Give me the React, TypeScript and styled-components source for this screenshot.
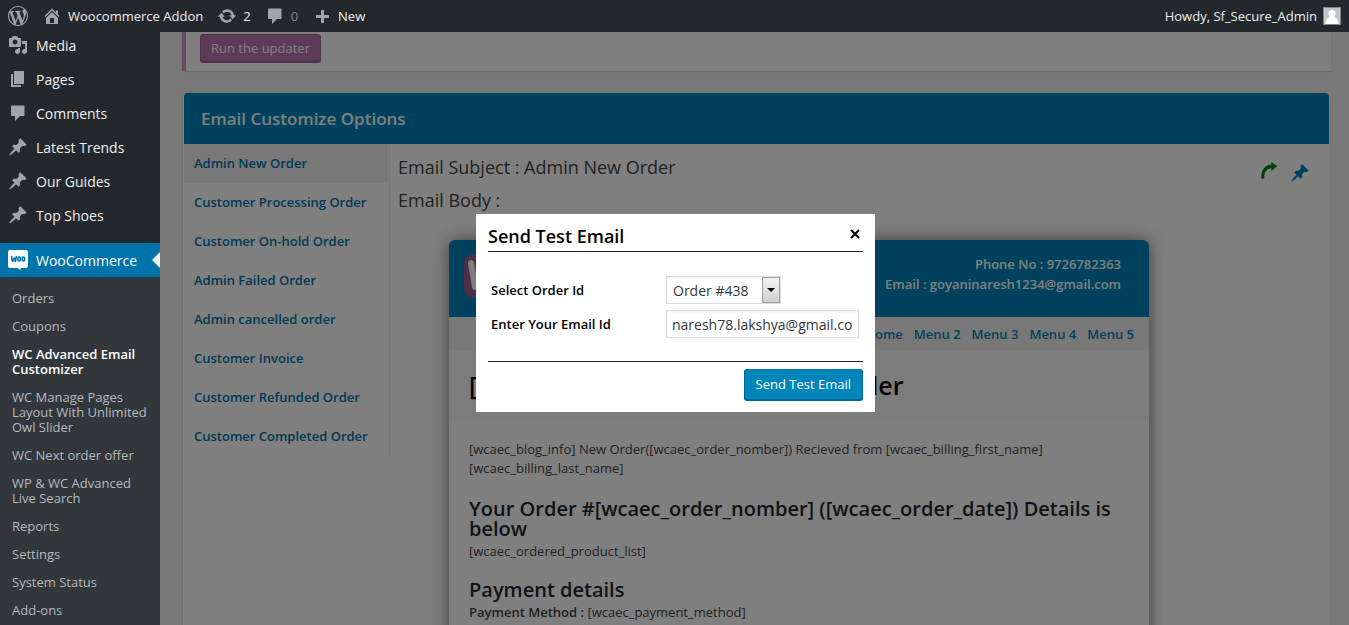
import React from "react";
import styled, { createGlobalStyle, css } from "styled-components";

const GlobalStyle = createGlobalStyle`
  *, *::before, *::after { box-sizing: border-box; }
  html, body { margin: 0; padding: 0; background: #f1f1f1; }
  body {
    font-family: "Open Sans", "Liberation Sans", sans-serif;
    font-size: 13px;
    line-height: 19px;
    color: #444;
  }
  a { text-decoration: none; color: #0073aa; }
  h1, h2, h3, h4, p, ul { margin: 0; padding: 0; }
  ul { list-style: none; }
`;

const icons = {
  wordpress:
    "M20 10c0-5.51-4.49-10-10-10C4.48 0 0 4.49 0 10c0 5.52 4.48 10 10 10 5.51 0 10-4.48 10-10zM7.78 15.37L4.37 6.22c.55-.02 1.17-.08 1.17-.08.5-.06.44-1.13-.06-1.11 0 0-1.45.11-2.37.11-.18 0-.37 0-.58-.01C4.12 2.69 6.87 1.11 10 1.11c2.33 0 4.45.87 6.05 2.34-.68-.11-1.65.39-1.65 1.58 0 .74.45 1.36.9 2.1.35.61.55 1.36.55 2.46 0 1.49-1.4 5-1.4 5l-3.03-8.37c.54-.02.82-.17.82-.17.5-.05.44-1.25-.06-1.22 0 0-1.44.12-2.38.12-.87 0-2.33-.12-2.33-.12-.5-.03-.56 1.2-.06 1.22l.92.08 1.26 3.41zM17.41 10c.24-.64.74-1.87.43-4.25.7 1.29 1.05 2.71 1.05 4.25 0 3.29-1.73 6.24-4.4 7.78.97-2.59 1.94-5.2 2.92-7.78zM6.1 18.09C3.12 16.65 1.11 13.53 1.11 10c0-1.3.23-2.48.72-3.59C3.25 10.3 4.67 14.2 6.1 18.09zm4.03-6.63l2.58 6.98c-.86.29-1.76.45-2.71.45-.79 0-1.57-.11-2.29-.33.81-2.38 1.62-4.74 2.42-7.1z",
  home: "M16 8.5l1.53 1.53-1.06 1.06L10 4.6l-6.47 6.49-1.06-1.06L10 2.5l4 4v-2h2v4zm-6-2.46l6 5.99V18H4v-5.97zM12 17v-5H8v5h4z",
  update:
    "M10.2 3.28c3.53 0 6.43 2.61 6.92 6h2.08l-3.5 4-3.5-4h2.32c-.45-1.97-2.21-3.45-4.32-3.45-1.45 0-2.73.71-3.54 1.78L4.95 5.66C6.23 4.2 8.11 3.28 10.2 3.28zm-.4 13.44c-3.52 0-6.43-2.61-6.92-6H.8l3.5-4c1.17 1.33 2.33 2.67 3.5 4H5.48c.45 1.97 2.21 3.45 4.32 3.45 1.45 0 2.73-.71 3.54-1.78l1.71 1.95c-1.28 1.46-3.15 2.38-5.25 2.38z",
  comments:
    "M4 2.500h11.500c.6 0 1 .4 1 1v8.500c0 .6-.4 1-1 1H12l-5 5v-5H4c-.6 0-1-.4-1-1V3.500c0-.6.4-1 1-1z",
  plus: "M17 9v3h-5v5H9v-5H4V9h5V4h3v5h5z",
  media:
    "M13 11V4c0-.55-.45-1-1-1h-1.67L9 1H5L3.67 3H2c-.55 0-1 .45-1 1v7c0 .55.45 1 1 1h10c.55 0 1-.45 1-1zM7 4.5c1.38 0 2.5 1.12 2.5 2.5S8.38 9.5 7 9.5 4.5 8.38 4.5 7 5.62 4.5 7 4.5zM14 6h5v10.5c0 1.38-1.12 2.5-2.5 2.5S14 17.88 14 16.5s1.12-2.5 2.5-2.5c.17 0 .34.02.5.05V9h-3V6zm-4 8.05V13h2v3.5c0 1.38-1.12 2.5-2.5 2.5S7 17.88 7 16.5 8.12 14 9.5 14c.17 0 .34.02.5.05z",
  pages: "M6 15V2h10v13H6zm-1 1h8v2H3V5h2v11z",
  pin: "M10.44 3.02l1.82-1.82 6.36 6.35-1.83 1.82c-1.05-.68-2.48-.57-3.41.36l-.75.75c-.92.93-1.04 2.35-.35 3.41l-1.83 1.82-2.41-2.41-2.8 2.79c-.42.42-3.38 2.71-3.8 2.29s1.86-3.39 2.28-3.81l2.79-2.79L4.1 9.36l1.83-1.82c1.05.69 2.48.57 3.4-.36l.75-.75c.93-.92 1.05-2.35.36-3.41z",
  forward:
    "M19.300 3.200L13.300 8V5.200C8.500 5.500 5.800 9.200 6.300 15.500l-2.800.5C2.500 7.200 7 2 13.300 1.500V-1z",
};

type IconName = keyof typeof icons;

const IconSvg = styled.svg`
  display: block;
  flex: none;
  width: 20px;
  height: 20px;
  overflow: visible;
  fill: currentColor;
`;

const Icon = ({ name }: { name: IconName }) => (
  <IconSvg viewBox="0 0 20 20" aria-hidden="true">
    <path d={icons[name]} />
  </IconSvg>
);

const Page = styled.div`
  height: 100vh;
  overflow: hidden;
  display: flex;
  flex-direction: column;
`;

/* Admin bar */

const AdminBar = styled.header`
  position: relative;
  z-index: 3;
  flex: none;
  height: 32px;
  padding: 0 8px;
  display: flex;
  justify-content: space-between;
  background: #23282d;
`;

const BarGroup = styled.nav`
  display: flex;
  align-items: center;
  gap: 14px;
`;

const BarLink = styled.a<{ $faded?: boolean }>`
  display: flex;
  align-items: center;
  gap: 6px;
  height: 32px;
  color: ${(p) => (p.$faded ? "#82878c" : "#eee")};
  svg { color: #a0a5aa; }
`;

const Avatar = styled.svg`
  display: block;
  width: 18px;
  height: 18px;
  border: 1px solid #82878c;
  background: #c5c5c5;
  fill: #fff;
`;

/* Side menu */

const Body = styled.div`
  flex: 1;
  min-height: 0;
  display: flex;
`;

const SideMenu = styled.nav`
  position: relative;
  z-index: 2;
  flex: none;
  width: 160px;
  overflow: hidden;
  background: #23282d;
`;

const MenuList = styled.ul`
  margin-top: -4px;
`;

const MenuLink = styled.a<{ $current?: boolean }>`
  display: flex;
  align-items: center;
  gap: 8px;
  height: 34px;
  padding: 0 0 0 8px;
  font-size: 14px;
  color: #eee;
  svg { color: #a0a5aa; }
  ${(p) =>
    p.$current &&
    css`
      position: relative;
      margin-top: 11px;
      background: #0073aa;
      color: #fff;
      svg { color: #fff; }
      &::after {
        content: "";
        position: absolute;
        right: 0;
        top: 9px;
        border: 8px solid transparent;
        border-right-color: #f1f1f1;
        border-left-width: 0;
      }
    `}
`;

const SubMenu = styled.ul`
  padding: 7px 0;
  background: #32373c;
`;

const SubLink = styled.a<{ $current?: boolean }>`
  display: block;
  padding: 7px 12px 6px;
  line-height: 15px;
  color: ${(p) => (p.$current ? "#fff" : "#b4b9be")};
  font-weight: ${(p) => (p.$current ? 600 : 400)};
`;

/* Content */

const Main = styled.main`
  flex: 1;
  min-width: 0;
  overflow: hidden;
  padding: 0 18px 0 22px;
`;

const Notice = styled.section`
  padding: 2px 14px 9px;
  margin-bottom: 21px;
  background: #fff;
  border-left: 4px solid #cc99c2;
  box-shadow: 0 1px 1px rgba(0, 0, 0, 0.1);
`;

const ActionButton = styled.button<{ $tone: "purple" | "blue" }>`
  display: block;
  font: inherit;
  color: #fff;
  border: 1px solid;
  border-radius: 3px;
  ${(p) =>
    p.$tone === "purple"
      ? css`
          height: 28px;
          padding: 0 10px;
          background: #bb77ae;
          border-color: #a36597;
          box-shadow: 0 1px 0 #a36597;
        `
      : css`
          height: 31px;
          padding: 0 11px;
          background: #0085ba;
          border-color: #0073aa #006799 #006799;
          box-shadow: 0 1px 0 #006799;
        `}
`;

const Panel = styled.section`
  padding: 0 1px;
  background: #fff;
  border: 1px solid #e5e5e5;
  border-radius: 4px;
`;

const PanelHeader = styled.header`
  height: 51px;
  padding: 0 17px;
  display: flex;
  align-items: center;
  background: #0085ba;
  border-radius: 4px 4px 0 0;
`;

const PanelTitle = styled.h2`
  font-size: 17px;
  font-weight: 600;
  color: #fff;
`;

const PanelBody = styled.div`
  display: flex;
  align-items: flex-start;
`;

const TabList = styled.ul`
  flex: none;
  width: 206px;
  padding: 0 1px 0 0;
  border-right: 1px solid #eee;
`;

const TabLink = styled.a<{ $active?: boolean }>`
  display: flex;
  align-items: center;
  height: 39px;
  padding: 0 10px;
  font-weight: 600;
  background: ${(p) => (p.$active ? "#f1f1f1" : "transparent")};
`;

const Editor = styled.div`
  flex: 1;
  min-width: 0;
  padding: 7px 19px 0 8px;
`;

const EditorTop = styled.div`
  display: flex;
  justify-content: space-between;
  align-items: center;
`;

const FieldTitle = styled.h3`
  font-size: 18px;
  line-height: 33px;
  font-weight: 400;
  color: #444;
`;

const Tools = styled.div`
  display: flex;
  gap: 12px;
  padding-top: 10px;
`;

const ToolLink = styled.a<{ $green?: boolean }>`
  color: ${(p) => (p.$green ? "#008000" : "#0085ba")};
`;

const Preview = styled.article`
  max-width: 700px;
  margin: 23px 0 0 51px;
  background: #fff;
  border-radius: 6px 6px 0 0;
  box-shadow: 0 0 18px rgba(0, 0, 0, 0.5);
`;

const PreviewHeader = styled.header`
  height: 77px;
  padding: 14px 28px 0 15px;
  display: flex;
  justify-content: space-between;
  background: #0085ba;
  border-radius: 6px 6px 0 0;
`;

const StoreLogo = styled.svg`
  display: block;
  width: 84px;
  height: 44px;
`;

const Contact = styled.address`
  font-style: normal;
  font-weight: 600;
  line-height: 20px;
  text-align: right;
  color: #fff;
`;

const PreviewNav = styled.nav`
  display: flex;
  justify-content: flex-end;
  gap: 11px;
  padding: 1px 15px 0;
  line-height: 33px;
  font-weight: 600;
  background: #f1f1f1;
  a { color: #0085ba; }
`;

const PreviewTitle = styled.h1`
  padding: 0 20px;
  font-size: 25px;
  line-height: 68px;
  font-weight: 600;
  color: #000;
  background: #f9f9f9;
`;

const PreviewBody = styled.div`
  padding: 21px 20px;
`;

const Intro = styled.p`
  padding-bottom: 2px;
`;

const SectionTitle = styled.h2`
  margin-top: 19px;
  padding-bottom: 3px;
  font-size: 20px;
  line-height: 20px;
  font-weight: 600;
  color: #23282d;
`;

const Bold = styled.span`
  font-weight: 600;
`;

/* Dialog */

const Overlay = styled.div`
  position: fixed;
  inset: 0;
  z-index: 1;
  padding: 1px 0 0 2px;
  display: flex;
  align-items: center;
  justify-content: center;
  background: rgba(0, 0, 0, 0.5);
`;

const Dialog = styled.form`
  width: 399px;
  padding: 8px 12px 12px;
  background: #fff;
  color: #000;
`;

const DialogHeader = styled.header`
  display: flex;
  justify-content: space-between;
  align-items: center;
  height: 30px;
  border-bottom: 1px solid #222;
`;

const DialogTitle = styled.h2`
  font-size: 18px;
  font-weight: 600;
`;

const CloseButton = styled.button`
  padding: 0 3px 6px;
  border: 0;
  background: none;
  svg { display: block; width: 10px; height: 10px; }
`;

const DialogFields = styled.div`
  display: grid;
  grid-template-columns: 175px 193px;
  align-items: center;
  justify-items: start;
  row-gap: 6px;
  padding: 24px 3px 23px;
`;

const Label = styled.label`
  font-weight: 600;
`;

const fieldStyle = css`
  height: 28px;
  border: 1px solid #ddd;
  border-radius: 0;
  background: #fff;
  box-shadow: inset 0 1px 2px rgba(0, 0, 0, 0.07);
  font: inherit;
  font-size: 14px;
  color: #32373c;
`;

const SelectBox = styled.div`
  position: relative;
  width: 115px;
`;

const Select = styled.select`
  ${fieldStyle}
  display: block;
  width: 100%;
  padding: 0 6px;
  appearance: none;
`;

const SelectArrow = styled.span`
  position: absolute;
  top: 1px;
  right: 1px;
  width: 18px;
  height: 26px;
  display: flex;
  align-items: center;
  justify-content: center;
  border: 1px solid #a0a0a0;
  background: linear-gradient(#f4f4f4, #cfcfcf);
  pointer-events: none;
  &::after {
    content: "";
    border: 4px solid transparent;
    border-top-color: #000;
    border-bottom-width: 0;
  }
`;

const TextInput = styled.input`
  ${fieldStyle}
  width: 100%;
  padding: 0 5px;
`;

const DialogFooter = styled.footer`
  display: flex;
  justify-content: flex-end;
  padding-top: 7px;
  border-top: 1px solid #222;
`;

const mainMenu: { label: string; icon: IconName }[] = [
  { label: "Media", icon: "media" },
  { label: "Pages", icon: "pages" },
  { label: "Comments", icon: "comments" },
  { label: "Latest Trends", icon: "pin" },
  { label: "Our Guides", icon: "pin" },
  { label: "Top Shoes", icon: "pin" },
];

const subMenu = [
  "Orders",
  "Coupons",
  "WC Advanced Email Customizer",
  "WC Manage Pages Layout With Unlimited Owl Slider",
  "WC Next order offer",
  "WP & WC Advanced Live Search",
  "Reports",
  "Settings",
  "System Status",
  "Add-ons",
];

const tabs = [
  "Admin New Order",
  "Customer Processing Order",
  "Customer On-hold Order",
  "Admin Failed Order",
  "Admin cancelled order",
  "Customer Invoice",
  "Customer Refunded Order",
  "Customer Completed Order",
];

const WooIcon = () => (
  <IconSvg viewBox="0 0 20 20" aria-hidden="true">
    <path d="M2 0h16a2 2 0 0 1 2 2v14a2 2 0 0 1-2 2h-5l-1 2-2.500-2H2a2 2 0 0 1-2-2V2a2 2 0 0 1 2-2z" />
    <g fill="none" stroke="#0073aa" strokeWidth="1.600" strokeLinecap="round" strokeLinejoin="round">
      <path d="M3.500 6.500l1 5 1.700-3.500 1.300 3.500.8-5" />
      <ellipse cx="11.200" cy="9" rx="1.200" ry="2" />
      <ellipse cx="15.400" cy="9" rx="1.200" ry="2" />
    </g>
  </IconSvg>
);

export default function App() {
  return (
    <>
      <GlobalStyle />
      <Page>
        <AdminBar>
          <BarGroup>
            <BarLink href="#" aria-label="About WordPress">
              <Icon name="wordpress" />
            </BarLink>
            <BarLink href="#">
              <Icon name="home" />
              Woocommerce Addon
            </BarLink>
            <BarLink href="#">
              <Icon name="update" />2
            </BarLink>
            <BarLink href="#" $faded>
              <Icon name="comments" />0
            </BarLink>
            <BarLink href="#">
              <Icon name="plus" />
              New
            </BarLink>
          </BarGroup>
          <BarLink href="#">
            Howdy, Sf_Secure_Admin
            <Avatar viewBox="0 0 16 16" aria-hidden="true">
              <path d="M8 2c2.300 0 3.600 1.600 3.600 3.600 0 1.500-.7 2.700-1.600 3.400 2.400.7 4.200 2.500 4.500 7h-13c.3-4.500 2.100-6.300 4.500-7-.9-.7-1.600-1.900-1.600-3.400C4.400 3.600 5.700 2 8 2z" />
            </Avatar>
          </BarLink>
        </AdminBar>

        <Body>
          <SideMenu aria-label="Main menu">
            <MenuList>
              {mainMenu.map((item) => (
                <li key={item.label}>
                  <MenuLink href="#">
                    <Icon name={item.icon} />
                    {item.label}
                  </MenuLink>
                </li>
              ))}
              <li>
                <MenuLink href="#" $current>
                  <WooIcon />
                  WooCommerce
                </MenuLink>
                <SubMenu>
                  {subMenu.map((label) => (
                    <li key={label}>
                      <SubLink href="#" $current={label === "WC Advanced Email Customizer"}>
                        {label}
                      </SubLink>
                    </li>
                  ))}
                </SubMenu>
              </li>
            </MenuList>
          </SideMenu>

          <Main>
            <Notice>
              <ActionButton type="button" $tone="purple">
                Run the updater
              </ActionButton>
            </Notice>
            <Panel>
              <PanelHeader>
                <PanelTitle>Email Customize Options</PanelTitle>
              </PanelHeader>
              <PanelBody>
                <TabList>
                  {tabs.map((label, i) => (
                    <li key={label}>
                      <TabLink href="#" $active={i === 0}>
                        {label}
                      </TabLink>
                    </li>
                  ))}
                </TabList>
                <Editor>
                  <EditorTop>
                    <FieldTitle>Email Subject : Admin New Order</FieldTitle>
                    <Tools>
                      <ToolLink href="#" $green aria-label="Send test email">
                        <Icon name="forward" />
                      </ToolLink>
                      <ToolLink href="#" aria-label="Customize">
                        <Icon name="pin" />
                      </ToolLink>
                    </Tools>
                  </EditorTop>
                  <FieldTitle>Email Body :</FieldTitle>
                  <Preview>
                    <PreviewHeader>
                      <StoreLogo viewBox="0 0 84 44" aria-hidden="true">
                        <rect y="1" width="84" height="42" rx="8" fill="#9b5c8f" />
                        <path
                          d="M7 9l4 24 9-17 5 17 5-24"
                          fill="none"
                          stroke="#fff"
                          strokeWidth="6"
                          strokeLinecap="round"
                          strokeLinejoin="round"
                        />
                      </StoreLogo>
                      <Contact>
                        Phone No : 9726782363
                        <br />
                        Email : goyaninaresh1234@gmail.com
                      </Contact>
                    </PreviewHeader>
                    <PreviewNav>
                      {["Home", "Menu 2", "Menu 3", "Menu 4", "Menu 5"].map((m) => (
                        <a href="#" key={m}>
                          {m}
                        </a>
                      ))}
                    </PreviewNav>
                    <PreviewTitle>[wcaec_blog_info] Admin New Order</PreviewTitle>
                    <PreviewBody>
                      <Intro>
                        [wcaec_blog_info] New Order([wcaec_order_nomber]) Recieved from
                        [wcaec_billing_first_name] [wcaec_billing_last_name]
                      </Intro>
                      <SectionTitle>
                        Your Order #[wcaec_order_nomber] ([wcaec_order_date]) Details is below
                      </SectionTitle>
                      <p>[wcaec_ordered_product_list]</p>
                      <SectionTitle>Payment details</SectionTitle>
                      <p>
                        <Bold>Payment Method :</Bold> [wcaec_payment_method]
                      </p>
                    </PreviewBody>
                  </Preview>
                </Editor>
              </PanelBody>
            </Panel>
          </Main>
        </Body>

        <Overlay>
          <Dialog
            role="dialog"
            aria-labelledby="dialog-title"
            onSubmit={(e: React.FormEvent) => e.preventDefault()}
          >
            <DialogHeader>
              <DialogTitle id="dialog-title">Send Test Email</DialogTitle>
              <CloseButton type="button" aria-label="Close">
                <svg viewBox="0 0 10 10" aria-hidden="true">
                  <path d="M1 1l8 8M9 1l-8 8" stroke="#000" strokeWidth="2" />
                </svg>
              </CloseButton>
            </DialogHeader>
            <DialogFields>
              <Label htmlFor="order-id">Select Order Id</Label>
              <SelectBox>
                <Select id="order-id" defaultValue="438">
                  <option value="438">Order #438</option>
                </Select>
                <SelectArrow />
              </SelectBox>
              <Label htmlFor="email-id">Enter Your Email Id</Label>
              <TextInput id="email-id" type="text" defaultValue="naresh78.lakshya@gmail.com" />
            </DialogFields>
            <DialogFooter>
              <ActionButton type="submit" $tone="blue">
                Send Test Email
              </ActionButton>
            </DialogFooter>
          </Dialog>
        </Overlay>
      </Page>
    </>
  );
}
